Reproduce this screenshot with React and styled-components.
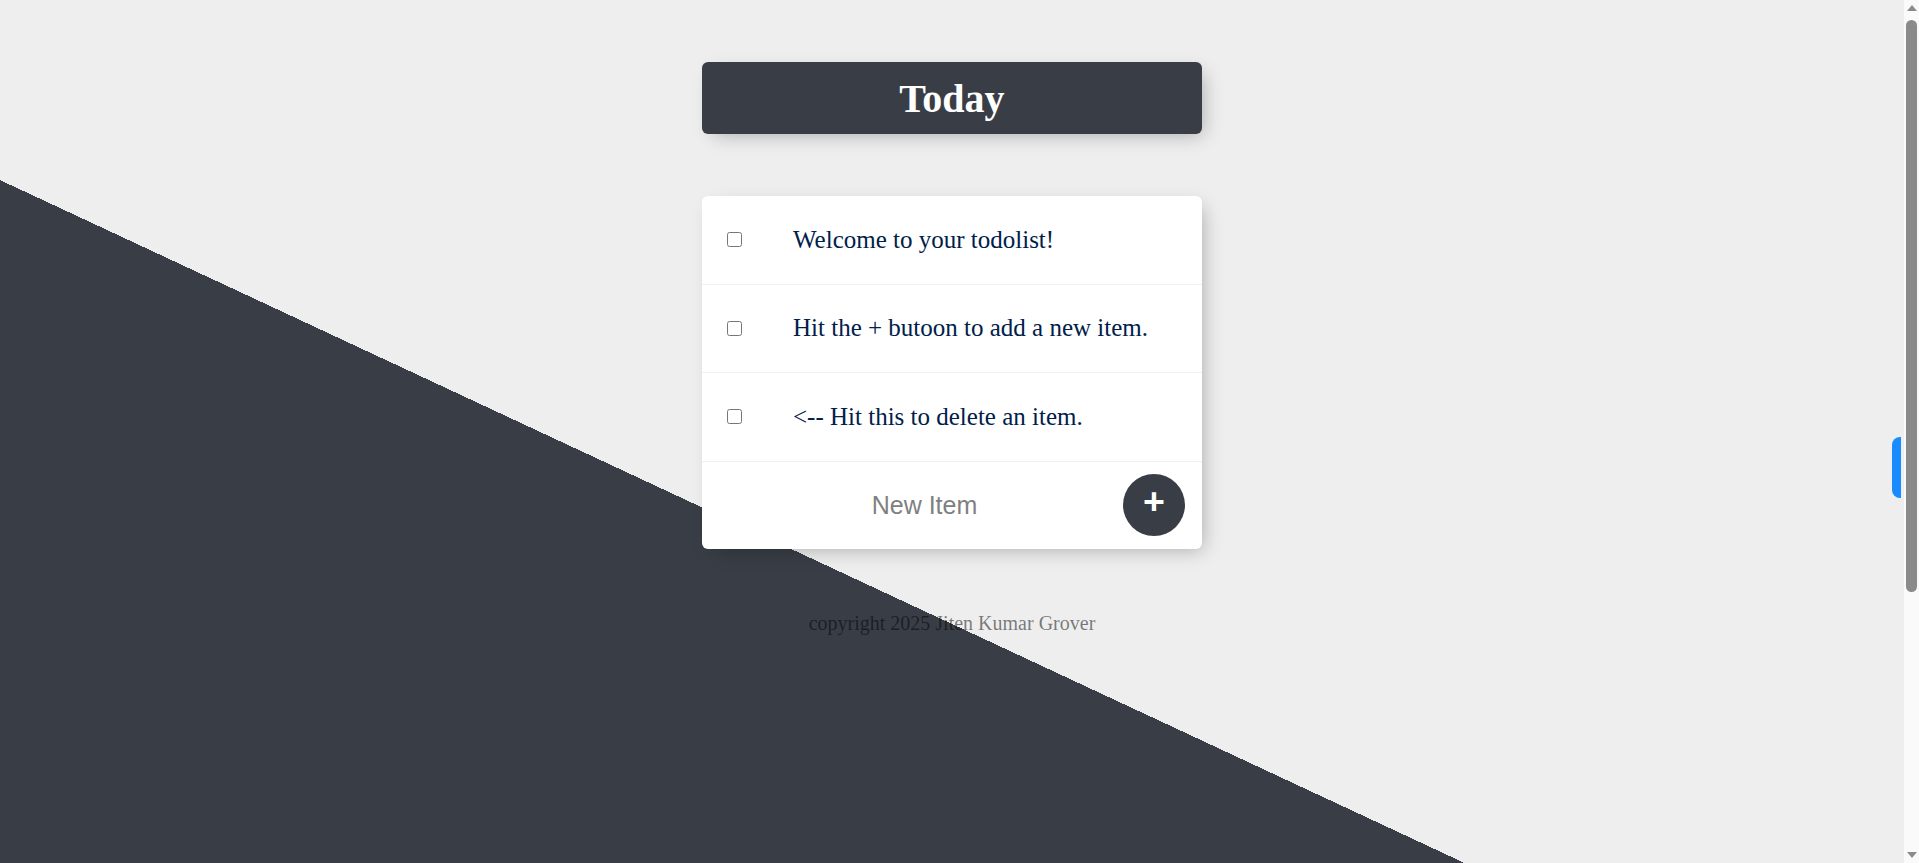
import React from "react";
import styled, { createGlobalStyle } from "styled-components";

const GlobalStyle = createGlobalStyle`
  html, body {
    margin: 0;
    padding: 0;
  }

  body {
    background: #eeeeee;
    font-family: "Liberation Serif", "Times New Roman", serif;
  }
`;

const Page = styled.div`
  min-height: 1248px;
  margin-right: 15px;
  box-sizing: border-box;
  padding-top: 62px;
  display: flex;
  flex-direction: column;
  align-items: center;
  background: linear-gradient(25deg, #393e46 50%, #eeeeee 50%);
`;

const Box = styled.div`
  width: 500px;
  margin-bottom: ${(props) => (props.dark ? "62px" : "62.5px")};
  background: ${(props) => (props.dark ? "#393e46" : "#ffffff")};
  border-radius: 6px;
  box-shadow: 6px 6px 19px -6px rgba(0, 0, 0, 0.3);
`;

const Heading = styled.h1`
  margin: 0;
  padding: 12.5px;
  color: #ffffff;
  font-size: 40px;
  font-weight: bold;
  text-align: center;
`;

const Item = styled.div`
  min-height: 87.5px;
  display: flex;
  align-items: center;
  border-bottom: 1px solid #f1f1f1;

  &:last-child {
    border-bottom: 0;
  }
`;

const Check = styled.input`
  width: 15px;
  height: 15px;
  margin: 25px 26px 25px 25px;
`;

const Text = styled.p`
  margin: 0;
  padding: 25px;
  font-size: 25px;
  font-weight: 200;
  color: #00204a;
  text-align: left;
`;

const NewItemForm = styled.form`
  min-height: 87.5px;
  display: flex;
  align-items: center;
  margin-left: 25px;
`;

const NewItemInput = styled.input`
  width: 391px;
  height: 75px;
  padding: 1px 2px;
  border: none;
  background: transparent;
  text-align: center;
  font-family: "Liberation Sans", Arial, sans-serif;
  font-size: 25px;
  font-weight: 200;
  color: #000;

  &::placeholder {
    color: grey;
    opacity: 1;
  }

  &:focus {
    outline: none;
    box-shadow: inset 0 -3px 0 0 #393e46;
  }
`;

const AddButton = styled.button`
  width: 62px;
  min-height: 62px;
  margin-left: 1px;
  padding: 0 0 7.5px;
  border: 0;
  border-radius: 50%;
  background: #393e46;
  color: #ffffff;
  font-family: "Liberation Sans", Arial, sans-serif;
  font-size: 37.5px;
  font-weight: bold;
  line-height: 1;
  cursor: pointer;
`;

const Footer = styled.footer`
  color: rgba(0, 0, 0, 0.5);
  font-size: 20px;
  text-align: center;
`;

const SideTab = styled.div`
  position: fixed;
  top: 437px;
  right: 18px;
  width: 9px;
  height: 61px;
  background: #188cff;
  border-radius: 8px 0 0 8px;
`;

/* browser scrollbar as seen in the capture */
const Scrollbar = styled.div`
  position: fixed;
  top: 0;
  right: 0;
  width: 15px;
  height: 100vh;
  background: #fafafa;
  display: flex;
  flex-direction: column;
  align-items: center;
`;

const Arrow = styled.div`
  width: 0;
  height: 0;
  margin: ${(props) => (props.down ? "auto 0 5px" : "5px 0 0")};
  border-left: 5px solid transparent;
  border-right: 5px solid transparent;
  border-${(props) => (props.down ? "top" : "bottom")}: 6px solid #8a8a8a;
`;

const Thumb = styled.div`
  width: 11px;
  height: 572px;
  margin-top: 9px;
  border-radius: 6px;
  background: #8a8a8a;
`;

const items = [
  "Welcome to your todolist!",
  "Hit the + butoon to add a new item.",
  "<-- Hit this to delete an item.",
];

export default function App() {
  return (
    <>
      <GlobalStyle />
      <Page>
        <Box dark>
          <Heading>Today</Heading>
        </Box>
        <Box>
          {items.map((text) => (
            <Item key={text}>
              <Check type="checkbox" />
              <Text>{text}</Text>
            </Item>
          ))}
          <NewItemForm onSubmit={(e) => e.preventDefault()}>
            <NewItemInput type="text" placeholder="New Item" autoComplete="off" />
            <AddButton type="submit">+</AddButton>
          </NewItemForm>
        </Box>
        <Footer>copyright 2025 Jiten Kumar Grover</Footer>
      </Page>
      <SideTab />
      <Scrollbar>
        <Arrow />
        <Thumb />
        <Arrow down />
      </Scrollbar>
    </>
  );
}
